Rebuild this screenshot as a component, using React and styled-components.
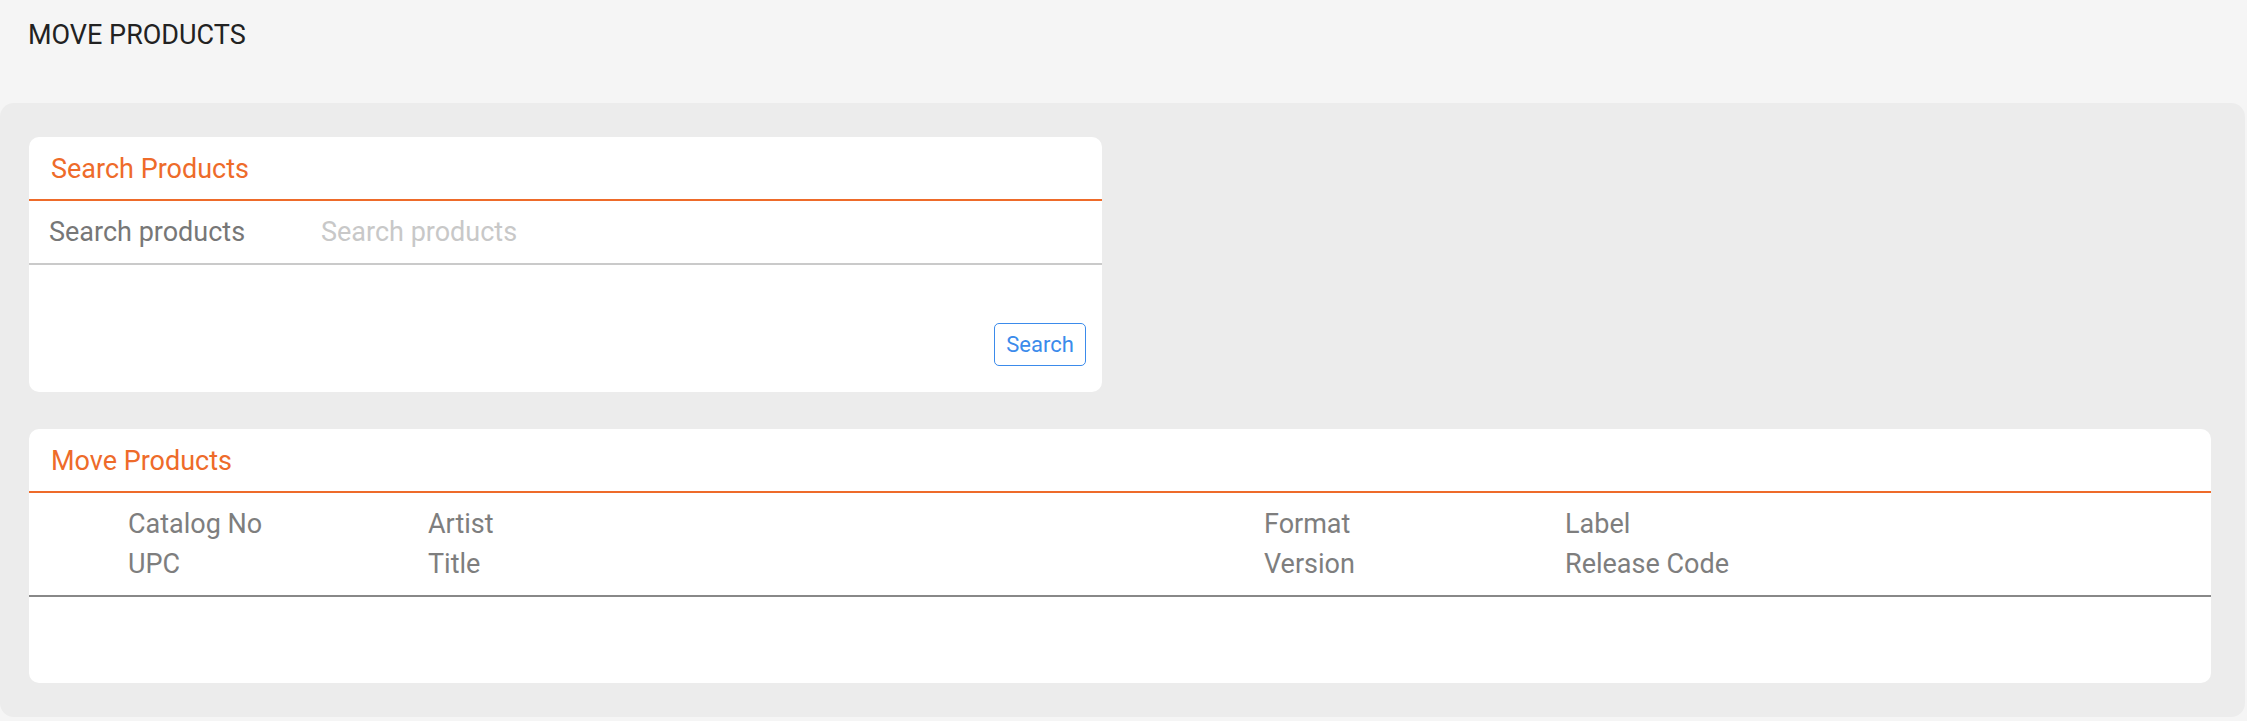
import styled, { createGlobalStyle } from 'styled-components';

const GlobalStyle = createGlobalStyle`
  html, body {
    margin: 0;
    padding: 0;
    background: #f5f5f5;
    font-family: Roboto, "Liberation Sans", sans-serif;
  }
`;

const Page = styled.div`
  min-height: 721px;
  display: flex;
  flex-direction: column;
`;

const TopBar = styled.header`
  height: 103px;
  box-sizing: border-box;
  padding: 19px 28px 0;
  font-size: 27px;
  color: #222;
`;

const Content = styled.main`
  background: #ececec;
  margin-right: 2px;
  border-radius: 14px;
  padding: 34px 34px 34px 29px;
  display: flex;
  flex-direction: column;
  gap: 37px;
  height: 614px;
  box-sizing: border-box;
`;

const Card = styled.section`
  background: #fff;
  border-radius: 10px;
  width: ${p => p.$width || 'auto'};
  overflow: hidden;
`;

const CardTitle = styled.h2`
  margin: 0;
  height: 64px;
  box-sizing: border-box;
  padding: 16px 22px 0;
  font-size: 27px;
  font-weight: 400;
  color: #ee6b2a;
  border-bottom: 2px solid #ee6b2a;
`;

const SearchRow = styled.div`
  display: flex;
  align-items: center;
  height: 64px;
  box-sizing: border-box;
  border-bottom: 2px solid #cacaca;
  padding: 0 0 1px 20px;
`;

const SearchLabel = styled.label`
  width: 272px;
  font-size: 27px;
  color: #777;
`;

const SearchInput = styled.input`
  flex: 1;
  border: none;
  outline: none;
  background: transparent;
  font-family: inherit;
  font-size: 27px;
  color: #333;
  padding: 0;
  &::placeholder {
    color: #c8c8c8;
  }
`;

const Actions = styled.div`
  display: flex;
  justify-content: flex-end;
  padding: 58px 16px 26px;
`;

const Button = styled.button`
  height: 43px;
  width: 92px;
  padding: 0;
  border: 1.5px solid #3b8beb;
  border-radius: 5px;
  background: #fff;
  color: #3b8beb;
  font-family: inherit;
  font-size: 22px;
`;

const HeadTable = styled.div`
  display: grid;
  grid-template-columns: 300px 836px 301px 1fr;
  padding: 11px 0 11px 99px;
  border-bottom: 2px solid #888;
`;

const HeadCell = styled.div`
  font-size: 27px;
  line-height: 40px;
  color: #7e7e7e;
`;

const Body = styled.div`
  height: 86px;
`;

const columns = ['Catalog No', 'Artist', 'Format', 'Label', 'UPC', 'Title', 'Version', 'Release Code'];

export default function App() {
  return (
    <Page>
      <GlobalStyle />
      <TopBar>MOVE PRODUCTS</TopBar>
      <Content>
        <Card $width="1073px">
          <CardTitle>Search Products</CardTitle>
          <SearchRow>
            <SearchLabel htmlFor="search">Search products</SearchLabel>
            <SearchInput id="search" placeholder="Search products" />
          </SearchRow>
          <Actions>
            <Button>Search</Button>
          </Actions>
        </Card>
        <Card>
          <CardTitle>Move Products</CardTitle>
          <HeadTable>
            {columns.map(c => (
              <HeadCell key={c}>{c}</HeadCell>
            ))}
          </HeadTable>
          <Body />
        </Card>
      </Content>
    </Page>
  );
}
